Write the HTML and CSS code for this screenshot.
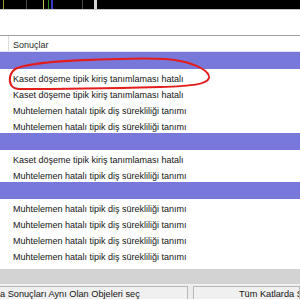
FILE: index.html
```html
<!DOCTYPE html>
<html lang="tr">
<head>
    <meta charset="UTF-8">
    <title>Sonuçlar</title>
    <link rel="stylesheet" href="styles.css">
</head>
<body>
    <div class="plan-strip">
        <span class="ln olive"></span>
        <span class="blk navy w22"></span>
        <span class="ln gray"></span>
        <span class="blk w16"></span>
        <span class="ln yellow"></span>
        <span class="blk w4"></span>
        <span class="ln green"></span>
        <span class="blk w2"></span>
        <span class="ln blue w2"></span>
        <span class="blk navy w7"></span>
        <span class="blk w22"></span>
        <span class="ln gray"></span>
        <span class="blk w11"></span>
        <span class="ln light w3"></span>
        <span class="blk fill"></span>
    </div>

    <div class="spacer"></div>

    <div class="results">
        <div class="results-head">
            <div class="col-mark"></div>
            <div class="col-title">Sonuçlar</div>
        </div>

        <div class="group"></div>
        <div class="row">Kaset döşeme tipik kiriş tanımlaması hatalı</div>
        <div class="row">Kaset döşeme tipik kiriş tanımlaması hatalı</div>
        <div class="row">Muhtelemen hatalı tipik diş sürekliliği tanımı</div>
        <div class="row">Muhtelemen hatalı tipik diş sürekliliği tanımı</div>

        <div class="group"></div>
        <div class="row">Kaset döşeme tipik kiriş tanımlaması hatalı</div>
        <div class="row">Muhtelemen hatalı tipik diş sürekliliği tanımı</div>

        <div class="group"></div>
        <div class="row">Muhtelemen hatalı tipik diş sürekliliği tanımı</div>
        <div class="row">Muhtelemen hatalı tipik diş sürekliliği tanımı</div>
        <div class="row">Muhtelemen hatalı tipik diş sürekliliği tanımı</div>
        <div class="row">Muhtelemen hatalı tipik diş sürekliliği tanımı</div>
        <div class="rows-end"></div>

        <!-- hand-drawn marker over the first row -->
        <svg class="scribble" width="220" height="40" viewBox="0 0 220 40">
            <path d="M15 16 C30 9, 70 7, 120 6 C150 5, 170 6, 180 8 C196 11, 210 18, 209 25 C207 31, 195 33, 160 34 C120 35, 60 36, 20 36 C11 36, 9 30, 10 24 C11 20, 13 17, 17 15"
                  fill="none" stroke="#e41c1c" stroke-width="2" stroke-linecap="round"/>
        </svg>
    </div>

    <div class="panel-gap"></div>

    <div class="status-bar">
        <button type="button" class="status-btn left">a Sonuçları Aynı Olan Objeleri seç</button>
        <button type="button" class="status-btn right">Tüm Katlarda Sonuçları Göster</button>
    </div>
</body>
</html>
```

FILE: styles.css
```css
* {
    margin: 0;
    padding: 0;
    box-sizing: border-box;
}

body {
    width: 300px;
    height: 300px;
    overflow: hidden;
    background: #ffffff;
    font-family: 'Liberation Sans', Arial, sans-serif;
    font-size: 9px;
    color: #141414;
}

/* dark plan view strip at the top */
.plan-strip {
    display: flex;
    height: 10px;
    background: #000;
    border-bottom: 1px solid #c4c4c4;
}

.plan-strip span {
    display: block;
    height: 100%;
    flex: none;
}

.ln { width: 1px; }
.olive { background: #9c9c28; margin-left: 3px; }
.gray { background: #474747; }
.yellow { background: #c8c84a; }
.green { background: #2a8a2a; }
.blue { background: #3a3ac8; }
.light { background: #d6d6d6; }
.navy { background: #0f1d2b; }
.blk { background: #000; }

.w2 { width: 2px; }
.w3 { width: 3px; }
.w4 { width: 4px; }
.w7 { width: 7px; }
.w11 { width: 11px; }
.w16 { width: 16px; }
.w22 { width: 22px; }
.fill { flex: 1 !important; }

.spacer {
    height: 25px;
}

.results {
    position: relative;
    border-top: 1px solid #a0a0a8;
}

.results-head {
    display: flex;
    height: 16px;
    border-bottom: 1px solid #e4e4f4;
}

.col-mark {
    width: 9px;
    border-right: 1px solid #dcdcdc;
}

.col-title {
    padding-left: 4px;
    line-height: 18px;
    color: #2a2a2a;
}

.group {
    height: 17px;
    background: #7878da;
}

.row {
    height: 16px;
    line-height: 16px;
    padding-top: 2px;
    padding-left: 13px;
    white-space: nowrap;
    overflow: hidden;
}

.rows-end {
    height: 6px;
}

.scribble {
    position: absolute;
    left: 0;
    top: 17px;
}

.panel-gap {
    height: 16px;
    background: #d3d3d3;
    border-bottom: 1px solid #f2f2f2;
}

.status-bar {
    display: flex;
    gap: 5px;
    height: 14px;
    background: #ececec;
    padding-top: 1px;
}

.status-btn {
    border: 1px solid #b8b8b8;
    border-bottom: none;
    background: #f0f0f0;
    font-family: inherit;
    font-size: 9.2px;
    color: #141414;
    white-space: nowrap;
    overflow: hidden;
    line-height: 15px;
    text-align: left;
}

.status-btn.left {
    width: 188px;
    border-left: none;
}

.status-btn.right {
    flex: 1;
    padding-left: 45px;
}
```
